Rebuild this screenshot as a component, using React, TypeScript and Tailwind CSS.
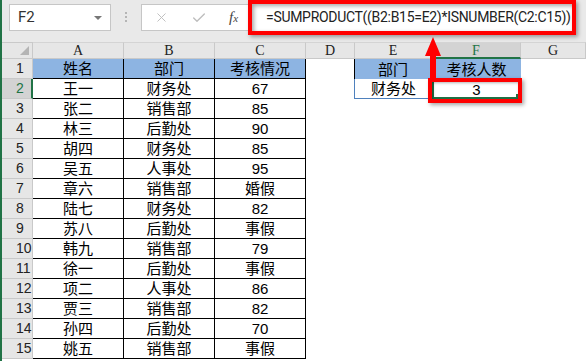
import { Check, X } from "lucide-react";

const rows = [
  ["王一", "财务处", "67"],
  ["张二", "销售部", "85"],
  ["林三", "后勤处", "90"],
  ["胡四", "财务处", "85"],
  ["吴五", "人事处", "95"],
  ["章六", "销售部", "婚假"],
  ["陆七", "财务处", "82"],
  ["苏八", "后勤处", "事假"],
  ["韩九", "销售部", "79"],
  ["徐一", "后勤处", "事假"],
  ["项二", "人事处", "86"],
  ["贾三", "销售部", "82"],
  ["孙四", "后勤处", "70"],
  ["姚五", "销售部", "事假"],
];

const cols = ["A", "B", "C", "D", "E", "F", "G"];

const cjk = "font-['Liberation_Sans','Noto_Sans_CJK_SC',sans-serif]";

function RowHead({ n, active }: { n: number; active?: boolean }) {
  return (
    <div
      className={
        "h-[20px] flex items-center pl-[14px] text-[14px] border-b border-[#c9c9c9] font-['Liberation_Sans',sans-serif] " +
        (active ? "bg-[#d3d3d3] text-[#217346] border-r-2 border-r-[#217346]" : "bg-[#e6e6e6] text-[#222] border-r border-r-[#c9c9c9]")
      }
    >
      {n}
    </div>
  );
}

function Cell({ text, className = "" }: { text?: string; className?: string }) {
  return (
    <div className={"h-[20px] flex items-center justify-center text-[15px] text-black pt-[2px] " + cjk + " " + className}>
      {text}
    </div>
  );
}

export default function App() {
  return (
    <div className="w-[586px] h-[361px] overflow-hidden bg-white flex border-l-2 border-[#217346] relative">
      <div className="flex-1 flex flex-col">
        {/* formula bar */}
        <div className="h-[42px] bg-[#e9e9e9] flex items-start">
          <div className="shrink-0 mt-[4px] ml-[7px] w-[102px] h-[27px] bg-white border border-[#c6c6c6] flex items-center justify-between pl-[8px] pr-[8px]">
            <span className="text-[15px] text-[#333] font-['Roboto',sans-serif]">F2</span>
            <span className="w-0 h-0 border-l-[4px] border-r-[4px] border-t-[4px] border-l-transparent border-r-transparent border-t-[#777]"></span>
          </div>
          <div className="shrink-0 mt-[12px] ml-[14px] flex flex-col gap-[2px]">
            <span className="w-[2px] h-[2px] bg-[#b5b5b5]"></span>
            <span className="w-[2px] h-[2px] bg-[#b5b5b5]"></span>
            <span className="w-[2px] h-[2px] bg-[#b5b5b5]"></span>
          </div>
          <div className="shrink-0 mt-[4px] ml-[14px] w-[107px] h-[27px] bg-white border border-r-0 border-[#c6c6c6] flex items-center pl-[12px]">
            <X size={15} strokeWidth={1.5} className="text-[#bdbdbd]" />
            <Check size={16} strokeWidth={2} className="text-[#bdbdbd] ml-[22px]" />
            <span className="ml-[22px] text-[15px] italic text-[#444] font-['Liberation_Serif',serif]">
              f<span className="text-[11px]">x</span>
            </span>
          </div>
          <div className="shrink-0 w-[328px] h-[35px] border-4 border-[#ff0000] bg-white flex items-center pl-[14px] overflow-hidden shadow-[inset_2px_2px_4px_rgba(0,0,0,0.35),2px_2px_4px_rgba(0,0,0,0.35)]">
            <span className="text-[14px] tracking-[-0.3px] text-[#222] font-['Roboto',sans-serif] whitespace-nowrap">
              =SUMPRODUCT((B2:B15=E2)*ISNUMBER(C2:C15))
            </span>
          </div>
        </div>

        {/* sheet */}
        <div className="grid grid-cols-[31px_91px_91px_91px_49px_77px_89px_1fr]">
          <div className="h-[17px] bg-[#e6e6e6] border-t border-b border-r border-[#c9c9c9] relative">
            <svg className="absolute right-[3px] bottom-[3px]" width="9" height="9">
              <polygon points="9,0 9,9 0,9" fill="#b4b4b4" />
            </svg>
          </div>
          {cols.map((c) => (
            <div
              key={c}
              className={
                "h-[17px] flex items-center justify-center text-[14px] border-t border-t-[#d4d4d4] border-r border-r-[#c9c9c9] font-['Liberation_Serif',serif] " +
                (c === "F"
                  ? "bg-[#d3d3d3] text-[#217346] border-b-2 border-b-[#217346]"
                  : "bg-[#e6e6e6] text-[#222] border-b border-b-[#c9c9c9]")
              }
            >
              {c}
            </div>
          ))}

          {/* row 1 */}
          <RowHead n={1} />
          <Cell text="姓名" className="bg-[#8db4e2] border-r border-b border-black" />
          <Cell text="部门" className="bg-[#8db4e2] border-r border-b border-black" />
          <Cell text="考核情况" className="bg-[#8db4e2] border-r border-b border-black" />
          <Cell className="border-r border-black" />
          <Cell text="部门" className="bg-[#8db4e2] border-r border-black" />
          <Cell text="考核人数" className="bg-[#8db4e2]" />
          <Cell />

          {rows.map((r, i) => (
            <div key={i} className="contents">
              <RowHead n={i + 2} active={i === 0} />
              <Cell text={r[0]} className="border-r border-b border-black" />
              <Cell text={r[1]} className="border-r border-b border-black" />
              <Cell text={r[2]} className="border-r border-b border-black" />
              {i === 0 ? (
                <>
                  <Cell className="border-r border-[#4f81bd]" />
                  <Cell text="财务处" className="border-b border-[#4f81bd]" />
                  <div className="relative">
                    <Cell text="3" className="border-2 border-[#217346]" />
                    <span className="absolute right-0 bottom-0 w-[5px] h-[5px] bg-[#217346]"></span>
                    <div className="absolute -left-[4px] -top-[1px] -right-[1px] -bottom-[4px] border-4 border-[#ff0000] shadow-[2px_2px_4px_rgba(0,0,0,0.35),inset_1px_1px_3px_rgba(0,0,0,0.3)]"></div>
                  </div>
                  <Cell />
                </>
              ) : (
                <>
                  <Cell />
                  <Cell />
                  <Cell />
                  <Cell />
                </>
              )}
            </div>
          ))}
        </div>
      </div>

      {/* arrow annotation */}
      <svg className="absolute left-[420px] top-[36px]" width="24" height="44" viewBox="0 0 24 44">
        <polygon points="11,1 19,20 14,20 14,42 8,42 8,20 3,20" fill="#ff0000" />
      </svg>
    </div>
  );
}
